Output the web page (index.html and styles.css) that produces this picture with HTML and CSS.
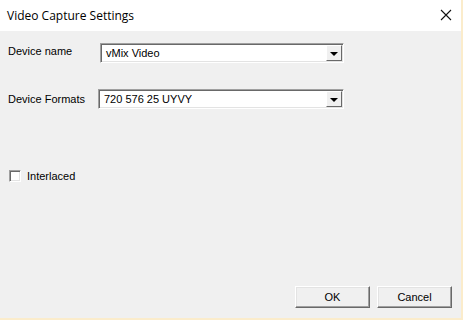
FILE: index.html
```html
<!DOCTYPE html>
<html lang="en">
<head>
    <meta charset="UTF-8">
    <title>Video Capture Settings</title>
    <link rel="stylesheet" href="styles.css">
</head>
<body>
    <div class="window">
        <div class="titlebar">
            <span class="title">Video Capture Settings</span>
            <svg class="close" width="12" height="12" viewBox="0 0 12 12">
                <path d="M1 1 L11 11 M11 1 L1 11" stroke="#111" stroke-width="1.1" fill="none"/>
            </svg>
        </div>
        <div class="content">
            <div class="row row-name">
                <span class="label label-name">Device name</span>
                <div class="combo">
                    <span class="combo-text">vMix Video</span>
                    <span class="drop"><span class="arrow"></span></span>
                </div>
            </div>
            <div class="row row-format">
                <span class="label label-format">Device Formats</span>
                <div class="combo combo-wide">
                    <span class="combo-text">720 576 25 UYVY</span>
                    <span class="drop"><span class="arrow"></span></span>
                </div>
            </div>
            <label class="check">
                <span class="box"></span>
                <span>Interlaced</span>
            </label>
            <div class="spacer"></div>
            <div class="footer">
                <button class="btn">OK</button>
                <button class="btn">Cancel</button>
            </div>
        </div>
    </div>
</body>
</html>
```

FILE: styles.css
```css
body {
    margin: 0;
    width: 463px;
    height: 320px;
    overflow: hidden;
    font-family: "Liberation Sans", Arial, sans-serif;
    font-size: 11px;
    color: #000;
}

.window {
    width: 461px;
    height: 318px;
    display: flex;
    flex-direction: column;
    background-color: #f0f0f0;
    border-right: 2px solid #fbeccb;
    border-bottom: 2px solid #fbeccb;
}

.titlebar {
    height: 31px;
    flex-shrink: 0;
    background-color: #fff;
    display: flex;
    align-items: center;
    justify-content: space-between;
    padding: 0 9px 0 7px;
}

.title {
    font-family: "Open Sans", "Noto Sans", sans-serif;
    font-size: 12px;
    color: #000;
    margin-top: -1px;
}

.close {
    margin-top: -1px;
}

.content {
    flex: 1;
    display: flex;
    flex-direction: column;
    padding: 12px 9px 10px 8px;
}

.row {
    display: flex;
    align-items: center;
    height: 20px;
}

.row-format {
    margin-top: 26px;
}

.label {
    flex-shrink: 0;
}

.label-name {
    width: 92px;
    margin-top: -5px;
}

.label-format {
    width: 90px;
    margin-top: -1px;
}

.combo {
    width: 244px;
    height: 20px;
    box-sizing: border-box;
    display: flex;
    align-items: center;
    background-color: #fff;
    border: 1px solid;
    border-color: #a0a0a0 #fff #fff #a0a0a0;
    box-shadow: inset 1px 1px 0 #696969, inset -1px -1px 0 #e3e3e3;
}

.combo-wide {
    width: 246px;
}

.combo-text {
    flex: 1;
    padding-left: 5px;
}

.drop {
    width: 16px;
    height: 16px;
    margin-right: 1px;
    box-sizing: border-box;
    display: flex;
    align-items: center;
    justify-content: center;
    background-color: #f0f0f0;
    border: 1px solid;
    border-color: #fff #696969 #696969 #fff;
}

.arrow {
    width: 0;
    height: 0;
    border-left: 4px solid transparent;
    border-right: 4px solid transparent;
    border-top: 4px solid #000;
    margin-top: 1px;
}

.check {
    display: flex;
    align-items: center;
    gap: 6px;
    margin-top: 61px;
    margin-left: 1px;
}

.box {
    width: 12px;
    height: 12px;
    box-sizing: border-box;
    background-color: #fff;
    border: 1px solid;
    border-color: #a0a0a0 #fff #fff #a0a0a0;
    box-shadow: inset 1px 1px 0 #696969, inset -1px -1px 0 #e3e3e3;
}

.spacer {
    flex: 1;
}

.footer {
    display: flex;
    justify-content: flex-end;
    gap: 7px;
}

.btn {
    width: 75px;
    height: 22px;
    font-family: "Liberation Sans", Arial, sans-serif;
    font-size: 11px;
    color: #000;
    background-color: #f0f0f0;
    border: 1px solid;
    border-color: #fff #696969 #696969 #fff;
    box-shadow: inset -1px -1px 0 #a0a0a0, inset 1px 1px 0 #e3e3e3;
    padding: 0;
}
```
